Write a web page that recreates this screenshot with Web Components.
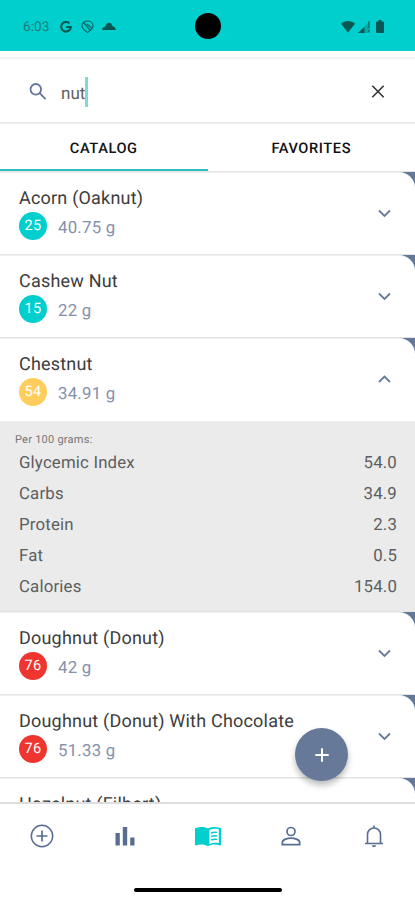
<!DOCTYPE html>
<html lang="en">
<head>
<meta charset="utf-8">
<meta name="viewport" content="width=device-width, initial-scale=1">
<title>Food catalog</title>
<style>
  html, body {
    margin: 0;
    height: 100%;
    overflow: hidden;
  }

  body {
    --teal: #00cfcd;
    --slate: #64799a;
    --line: #e4e4e5;
    font-family: Roboto, "Liberation Sans", sans-serif;
    text-rendering: geometricPrecision;
    color: #333;
    background: #fff;
  }
</style>
</head>
<body>
<food-app>
  <status-bar slot="top" time="6:03"></status-bar>
  <search-field slot="top" value="nut"></search-field>
  <tab-bar slot="top">
    <tab-item selected>CATALOG</tab-item>
    <tab-item>FAVORITES</tab-item>
  </tab-bar>

  <food-item index="25" level="low" amount="40.75 g">Acorn (Oaknut)</food-item>
  <food-item index="15" level="low" amount="22 g">Cashew Nut</food-item>
  <food-item index="54" level="medium" amount="34.91 g" open>Chestnut
    <nutrition-panel slot="details" caption="Per 100 grams:">
      <nutrition-row value="54.0">Glycemic Index</nutrition-row>
      <nutrition-row value="34.9">Carbs</nutrition-row>
      <nutrition-row value="2.3">Protein</nutrition-row>
      <nutrition-row value="0.5">Fat</nutrition-row>
      <nutrition-row value="154.0">Calories</nutrition-row>
    </nutrition-panel>
  </food-item>
  <food-item index="76" level="high" amount="42 g">Doughnut (Donut)</food-item>
  <food-item index="76" level="high" amount="51.33 g">Doughnut (Donut) With Chocolate</food-item>
  <food-item index="15" level="low" amount="16.7 g">Hazelnut (Filbert)</food-item>

  <add-button slot="floating"></add-button>
  <bottom-nav slot="bottom" active="catalog"></bottom-nav>
</food-app>

<script>
  // Base class: renders the template into an open shadow root
  class BaseElement extends HTMLElement {
    connectedCallback() {
      if (this.shadowRoot) return;
      const template = document.createElement('template');
      template.innerHTML = this.template();
      this.attachShadow({ mode: 'open' }).append(template.content.cloneNode(true));
    }

    attr(name) {
      return this.getAttribute(name) || '';
    }
  }

  class FoodApp extends BaseElement {
    template() {
      return `
        <style>
          :host {
            position: relative;
            display: flex;
            flex-direction: column;
            height: 900px;
            overflow: hidden;
          }

          .list {
            flex: 1;
            min-height: 0;
            overflow: hidden;
          }
        </style>
        <slot name="top"></slot>
        <div class="list"><slot></slot></div>
        <slot name="bottom"></slot>
        <slot name="floating"></slot>
      `;
    }
  }

  class StatusBar extends BaseElement {
    template() {
      return `
        <style>
          :host {
            display: grid;
            grid-template-columns: 1fr 26px 1fr;
            align-items: center;
            height: 51px;
            box-sizing: border-box;
            padding: 2px 31px 0 23px;
            background: var(--teal);
            color: #177f7c;
            flex: none;
          }

          .left, .right {
            display: flex;
            align-items: center;
          }

          .right {
            justify-content: flex-end;
          }

          .time {
            width: 37px;
            font-size: 13.5px;
            letter-spacing: 0.1px;
            line-height: 16px;
          }

          .camera {
            width: 26px;
            height: 26px;
            border-radius: 50%;
            background: #000;
            transform: translate(4px, -1px);
          }

          svg {
            display: block;
          }
        </style>
        <div class="left">
          <span class="time">${this.attr('time')}</span>
          <svg width="12" height="12" viewBox="0 0 12 12" fill="none" stroke="#075753" stroke-width="2.1">
            <path d="M9.5 2.5A4.8 4.8 0 1 0 10.8 6H6.2"/>
          </svg>
          <svg style="margin-left:9px" width="14" height="14" viewBox="0 0 14 14" fill="none" stroke="#076a67" stroke-width="1.2">
            <path d="M6.5 12.6C4 10.6 1 9 1 5.8 1 3 3.4 1 6.5 1s5.500 2 5.500 4.800c0 3.200-3 4.800-5.500 6.800ZM2.600 2.500l6.800 8M5.800 4l5.400 4.500"/>
          </svg>
          <svg style="margin-left:7px" width="14" height="9" viewBox="0 0 14 9" fill="#075753">
            <path d="M0 8C.2 6 1.700 5 3.200 4.600 4 2.300 5.300 .8 7 .8c2 0 3 1.600 3.500 3.400C12.500 4.500 13.700 6 14 8Z"/>
          </svg>
        </div>
        <div class="camera"></div>
        <div class="right">
          <svg width="14" height="12" viewBox="0 0 14 12" fill="#075753">
            <path d="M0 2.800C4-.8 10-.8 14 2.800L7 11.500Z"/>
          </svg>
          <svg style="margin-left:3px" width="12" height="12" viewBox="0 0 12 12" fill="#075753">
            <path d="M0 12 6.500 5.500V12Z"/>
            <path d="M6.500 5.500 12 0V12H6.500Z" opacity=".3"/>
            <path d="M10 0h1.500v7H10zM10 9h1.500v2H10z" opacity=".55"/>
          </svg>
          <svg style="margin-left:6px" width="8" height="13" viewBox="0 0 8 13" fill="#075753">
            <path d="M0 2.500q0-1 1-1h1.500V0h3v1.500H7q1 0 1 1V12q0 1-1 1H1q-1 0-1-1Z"/>
          </svg>
        </div>
      `;
    }
  }

  class SearchField extends BaseElement {
    template() {
      return `
        <style>
          :host {
            display: flex;
            align-items: center;
            height: 66px;
            box-sizing: border-box;
            margin-top: 6px;
            padding: 2px 29px 0 29px;
            border-top: 2px solid #f6f3f1;
            border-bottom: 1px solid var(--line);
            box-shadow: 0 1px 1px #f3f3f3;
            flex: none;
          }

          .value {
            flex: 1;
            margin-left: 14px;
            display: flex;
            align-items: center;
            font-size: 17px;
            color: #5f5f5f;
          }

          .value span:first-child {
            padding-top: 4px;
          }

          .caret {
            width: 3px;
            height: 30px;
            background: #83d8d1;
          }

          svg {
            display: block;
          }
        </style>
        <svg width="18" height="18" viewBox="0 0 18 18" fill="none" stroke="#64749a" stroke-width="1.8">
          <circle cx="6.8" cy="6.3" r="5.3"/>
          <path d="m10.7 10.2 5.900 5.900"/>
        </svg>
        <div class="value"><span>${this.attr('value')}</span><span class="caret"></span></div>
        <svg width="16" height="16" viewBox="0 0 16 16" fill="none" stroke="#333" stroke-width="1.6">
          <path d="m2.300 1.800 11.400 11.400M13.700 1.800 2.300 13.200"/>
        </svg>
      `;
    }
  }

  class TabBar extends BaseElement {
    template() {
      return `
        <style>
          :host {
            display: flex;
            height: 48px;
            box-sizing: border-box;
            flex: none;
          }
        </style>
        <slot></slot>
      `;
    }
  }

  class TabItem extends BaseElement {
    template() {
      return `
        <style>
          :host {
            flex: 1;
            display: flex;
            align-items: center;
            justify-content: center;
            box-sizing: border-box;
            padding-top: 4px;
            border-bottom: 2px solid transparent;
            font-size: 14.6px;
            font-weight: 500;
            letter-spacing: 0.6px;
            color: #111;
          }

          :host([selected]) {
            border-bottom-color: #2bbfc0;
          }
        </style>
        <slot></slot>
      `;
    }
  }

  class FoodItem extends BaseElement {
    template() {
      const colors = { low: 'var(--teal)', medium: '#ffcd5c', high: '#ef3530' };
      const arrow = this.hasAttribute('open') ? 'm1 7 5.500-5.500L12 7' : 'm1 1.500 5.500 5.500L12 1.500';
      return `
        <style>
          :host {
            display: block;
          }

          .back {
            background: var(--slate);
            border-top: 1px solid var(--line);
          }

          .card {
            display: flex;
            align-items: center;
            height: 82px;
            box-sizing: border-box;
            padding: 0 24px 0 19px;
            background: #fff;
            border-top: 1px solid #f1f1f1;
            border-top-right-radius: 16px;
          }

          :host([open]) .card {
            height: 83px;
            padding-bottom: 1px;
          }

          .text {
            flex: 1;
          }

          .title {
            padding-top: 2px;
            font-size: 18px;
            line-height: 22px;
            letter-spacing: 0.2px;
            color: #3c3c3c;
            white-space: nowrap;
          }

          .info {
            display: flex;
            align-items: flex-start;
            gap: 11px;
            margin-top: 2px;
            font-size: 16.8px;
            line-height: 28px;
            letter-spacing: 0.25px;
            color: #8590aa;
          }

          .badge {
            width: 28px;
            height: 28px;
            border-radius: 50%;
            background: ${colors[this.attr('level')]};
            color: #fff;
            font-size: 14.5px;
            text-align: center;
          }

          .amount {
            padding-top: 2px;
          }

          svg {
            display: block;
          }
        </style>
        <div class="back">
          <div class="card">
            <div class="text">
              <div class="title"><slot></slot></div>
              <div class="info">
                <span class="badge">${this.attr('index')}</span>
                <span class="amount">${this.attr('amount')}</span>
              </div>
            </div>
            <svg width="13" height="9" viewBox="0 0 13 9" fill="none" stroke="#667a9c" stroke-width="1.8">
              <path d="${arrow}"/>
            </svg>
          </div>
        </div>
        <slot name="details"></slot>
      `;
    }
  }

  class NutritionPanel extends BaseElement {
    template() {
      return `
        <style>
          :host {
            display: block;
            height: 190px;
            box-sizing: border-box;
            padding: 12px 18px 0 19px;
            background: #ebebeb;
          }

          .caption {
            margin: 0 0 2px -4px;
            font-size: 11px;
            line-height: 13px;
            letter-spacing: 0.25px;
            color: #777;
          }
        </style>
        <div class="caption">${this.attr('caption')}</div>
        <slot></slot>
      `;
    }
  }

  class NutritionRow extends BaseElement {
    template() {
      return `
        <style>
          :host {
            display: flex;
            justify-content: space-between;
            font-size: 16.8px;
            line-height: 31px;
            letter-spacing: 0.18px;
            color: #5c5e60;
          }
        </style>
        <span><slot></slot></span>
        <span>${this.attr('value')}</span>
      `;
    }
  }

  class AddButton extends BaseElement {
    template() {
      return `
        <style>
          :host {
            position: absolute;
            right: 67px;
            bottom: 119px;
            display: flex;
            align-items: center;
            justify-content: center;
            width: 53px;
            height: 53px;
            border-radius: 50%;
            background: #667998;
            box-shadow: 0 4px 6px rgba(0, 0, 0, 0.28);
          }
        </style>
        <svg width="14" height="14" viewBox="0 0 14 14" stroke="#fff" stroke-width="2">
          <path d="M7 .3v13.400M.3 7h13.400"/>
        </svg>
      `;
    }
  }

  class BottomNav extends BaseElement {
    template() {
      const icons = {
        add: '<circle cx="12" cy="12" r="10.7" fill="none" stroke="currentColor" stroke-width="1.5"/><path fill="none" stroke="currentColor" stroke-width="1.7" d="M12 6.500v11M6.500 12h11"/>',
        stats: '<path fill="currentColor" d="M2.500 9h4.300v12.500H2.500zM9.800 3h4.400v18.500H9.800zM17.200 13.500h4.300v8h-4.300z"/>',
        catalog: '<path fill="currentColor" d="M12 4.600C9 2.800 5 2.600.6 4c-.4.100-.6.400-.6.800v15.900c0 .5.400.8.900.7 4.100-1.200 8-1.100 11.100.8 3.100-1.900 7-2 11.100-.8.500.1.900-.2.900-.7V4.800c0-.4-.2-.7-.6-.8C19 2.600 15 2.800 12 4.600Z"/><path fill="#fff" d="M13.300 6c2.400-1.300 5.400-1.500 8.700-.8v13.900c-3-.6-6.100-.4-8.700.8Z"/><path fill="none" stroke="currentColor" stroke-width="1.400" d="M14.800 9c1.700-.7 3.600-.9 5.700-.6M14.800 12.500c1.700-.7 3.600-.9 5.700-.6M14.800 16c1.700-.7 3.600-.9 5.700-.6"/>',
        profile: '<g fill="none" stroke="currentColor" stroke-width="1.7"><circle cx="12" cy="7.5" r="4"/><path d="M3.300 20.700v-2.300c0-3 5.700-4.300 8.700-4.300s8.700 1.300 8.700 4.300v2.300Z"/></g>',
        alerts: '<path fill="none" stroke="currentColor" stroke-width="1.6" d="M3 19.500h18M5.500 19.500v-9c0-3.700 2.900-6.500 6.500-6.500s6.500 2.800 6.500 6.500v9M12 4V1.500"/><path fill="currentColor" d="M10 21.300h4a2 2 0 0 1-4 0Z"/>'
      };
      const items = Object.keys(icons).map((name) => `
        <div class="item ${name === this.attr('active') ? 'active' : ''}">
          <svg width="${name === 'catalog' ? 26 : 24}" height="24" viewBox="0 0 24 24" preserveAspectRatio="none">${icons[name]}</svg>
        </div>
      `).join('');
      return `
        <style>
          :host {
            display: block;
            height: 98px;
            box-sizing: border-box;
            border-top: 2px solid #dedede;
            background: #fff;
            flex: none;
          }

          .items {
            display: flex;
            height: 64px;
          }

          .item {
            flex: 1;
            display: flex;
            align-items: center;
            justify-content: center;
            color: #586d90;
          }

          .active {
            color: var(--teal);
          }

          .handle {
            width: 148px;
            height: 4px;
            margin: 20px auto 0;
            border-radius: 2px;
            background: #000;
          }
        </style>
        <div class="items">${items}</div>
        <div class="handle"></div>
      `;
    }
  }

  customElements.define('food-app', FoodApp);
  customElements.define('status-bar', StatusBar);
  customElements.define('search-field', SearchField);
  customElements.define('tab-bar', TabBar);
  customElements.define('tab-item', TabItem);
  customElements.define('food-item', FoodItem);
  customElements.define('nutrition-panel', NutritionPanel);
  customElements.define('nutrition-row', NutritionRow);
  customElements.define('add-button', AddButton);
  customElements.define('bottom-nav', BottomNav);
</script>
</body>
</html>
